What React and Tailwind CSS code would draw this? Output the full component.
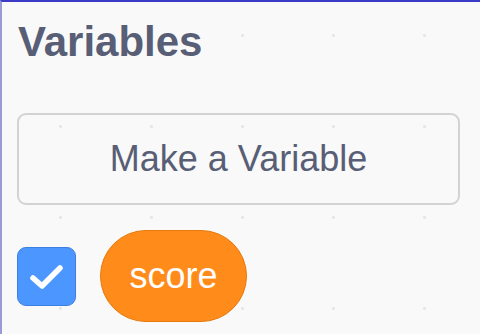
export default function App() {
  return (
    <div
      className="w-[480px] h-[334px] overflow-hidden bg-[#f9f9f9] border-t-2 border-l-2 border-t-[#3b3bc8] border-l-[#9a9ad8] bg-[radial-gradient(circle,#e6e6e6_1.2px,transparent_1.8px)] bg-[size:91px_91px] bg-[position:13px_-12px]"
      style={{ fontFamily: '"Liberation Sans", Arial, sans-serif' }}
    >
      <div className="pl-[16px] pt-[18px]">
        <div className="text-[42px] h-[43px] leading-[43px] font-bold text-[#575e75]">Variables</div>
      </div>
      <div className="pl-[15px] pr-[18px] mt-[50px]">
        <div className="h-[92px] w-[443px] rounded-[9px] border-2 border-[#d3d3d3] flex items-center justify-center text-[36px] text-[#575e75]">
          Make a Variable
        </div>
      </div>
      <div className="pl-[15px] mt-[25px] flex items-center gap-[24px]">
        <div className="w-[59px] h-[59px] rounded-[9px] bg-[#4c97ff] border border-[#3d7fe0] flex items-center justify-center">
          <svg width="38" height="30" viewBox="0 0 38 30">
            <path d="M5 17 L14 25 L32 7" fill="none" stroke="white" strokeWidth="5.5" strokeLinecap="round" strokeLinejoin="round" />
          </svg>
        </div>
        <div className="w-[147px] h-[92px] rounded-full bg-[#ff8c1a] border border-[#e67a0f] flex items-center justify-center text-white text-[36px]">
          score
        </div>
      </div>
    </div>
  );
}
